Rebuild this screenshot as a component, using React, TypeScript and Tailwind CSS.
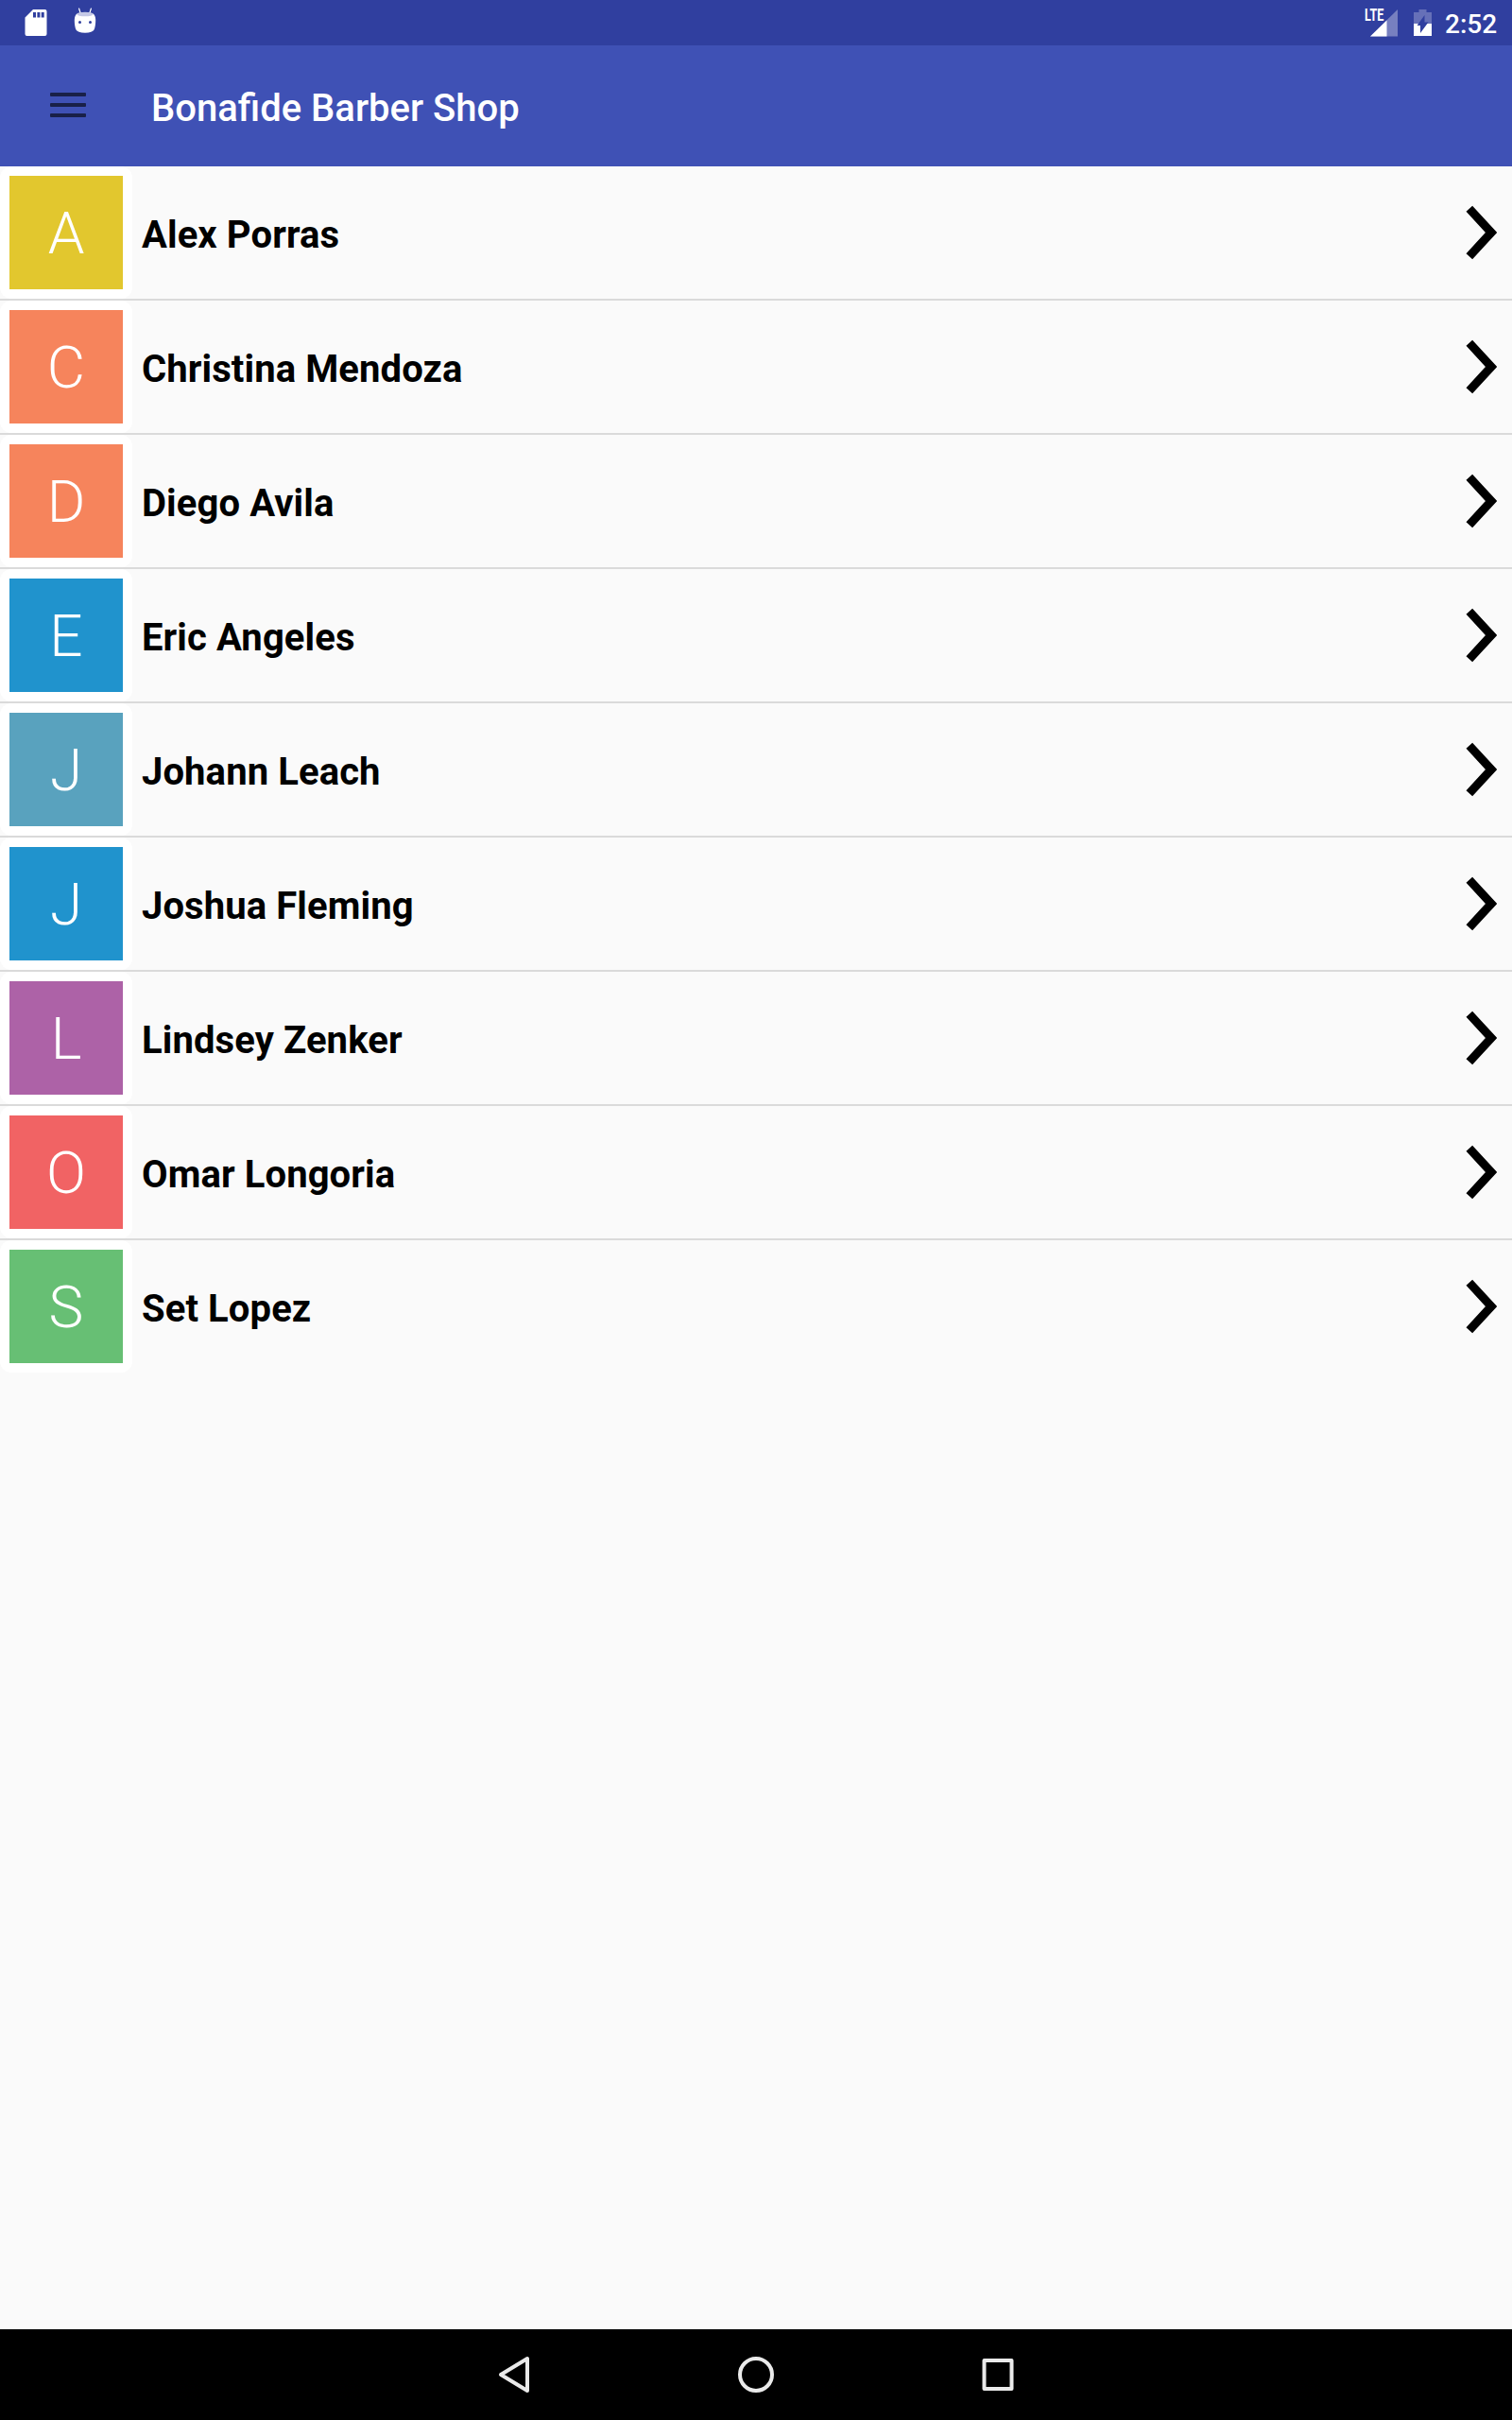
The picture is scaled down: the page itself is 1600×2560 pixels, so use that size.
const barbers = [
  { name: "Alex Porras", color: "bg-[#e2c72e]" },
  { name: "Christina Mendoza", color: "bg-[#f6845c]" },
  { name: "Diego Avila", color: "bg-[#f6845c]" },
  { name: "Eric Angeles", color: "bg-[#2093cd]" },
  { name: "Johann Leach", color: "bg-[#59a2be]" },
  { name: "Joshua Fleming", color: "bg-[#2093cd]" },
  { name: "Lindsey Zenker", color: "bg-[#ad62a7]" },
  { name: "Omar Longoria", color: "bg-[#f16364]" },
  { name: "Set Lopez", color: "bg-[#67bf74]" },
];

function StatusBar() {
  return (
    <div className="flex h-12 shrink-0 items-center bg-[#303f9f] text-white">
      <svg className="ml-[26px]" width="24" height="28" viewBox="0 0 24 28" fill="currentColor">
        <path
          fillRule="evenodd"
          d="M9 0H21.5A2 2 0 0 1 23.5 2V26A2 2 0 0 1 21.5 28H2.5A2 2 0 0 1 .5 26V8.5ZM9 3V8.5H12V3ZM13.4 3V8.5H16.4V3ZM17.7 3V8.5H20.7V3Z"
        />
      </svg>
      <svg className="mb-1 ml-7" width="24" height="28" viewBox="0 0 24 28" fill="currentColor">
        <path d="M5.6 1L7.2 6M18.4 1L16.8 6" stroke="currentColor" strokeWidth="1.2" strokeLinecap="round" />
        <path
          fillRule="evenodd"
          d="M3.5 6.5Q12 3.5 20.5 6.5Q23 8 23.2 13Q23.2 20 21.5 23.5Q20 26.5 12 26.8Q4 26.5 2.5 23.5Q.8 20 .8 13Q1 8 3.500 6.500ZM6.500 14A1.500 1.500 0 1 0 6.500 17A1.500 1.500 0 1 0 6.500 14ZM17.500 14A1.500 1.500 0 1 0 17.500 17A1.500 1.500 0 1 0 17.500 14Z"
        />
        <ellipse cx="12" cy="7" rx="8.500" ry="2.300" fill="#c5c9e6" />
      </svg>
      <div className="relative ml-auto h-12 w-9">
        <svg className="absolute top-[9px] left-[6px]" width="29" height="30" viewBox="0 0 29 30">
          <path d="M29 1V29.500H0Z" fill="#7780c0" />
          <path d="M17.500 12.500V29.500H0Z" fill="#fff" />
        </svg>
        <span className="absolute top-[9px] left-0 origin-left scale-x-[0.72] bg-[#303f9f] text-[17.500px] leading-[15px] font-bold">
          LTE
        </span>
      </div>
      <svg className="ml-4" width="19" height="30" viewBox="0 0 19 30">
        <path d="M5.500 1H13.500V4H19V29H0V4H5.500Z" fill="#6670b8" />
        <path d="M0 16H19V29H0Z" fill="#fff" />
        <path d="M11.500 7V14.500H15.500L7 26V18H3.500Z" fill="#303f9f" />
      </svg>
      <span className="mr-4 ml-[14px] w-[55px] pt-[3px] text-right text-[28px] leading-none font-medium">2:52</span>
    </div>
  );
}

function Toolbar() {
  return (
    <header className="flex h-32 shrink-0 items-center bg-[#3f51b5]">
      <div className="mb-[2px] ml-[53px] flex w-[38px] flex-col gap-[7px]">
        <div className="h-1 rounded-[1px] bg-[#192048]" />
        <div className="h-1 rounded-[1px] bg-[#192048]" />
        <div className="h-1 rounded-[1px] bg-[#192048]" />
      </div>
      <h1 className="ml-[69px] pt-[5px] text-[40px] leading-none font-medium text-white">Bonafide Barber Shop</h1>
    </header>
  );
}

function BarberRow({ name, color }: { name: string; color: string }) {
  return (
    <li className="flex h-[142px] items-center border-b-2 border-[#dadada] last:border-transparent">
      <div className="rounded-xl bg-white p-[10px]">
        <div
          className={`flex size-[120px] items-center justify-center pt-[2px] text-[62px] leading-none font-light text-white ${color}`}
        >
          {name[0]}
        </div>
      </div>
      <span className="ml-[10px] flex-1 pt-[6px] text-[40px] leading-none font-bold tracking-[0.1px] text-black">
        {name}
      </span>
      <svg className="mr-4" width="34" height="60" viewBox="0 0 34 60" fill="none">
        <path d="M4.800 4.800L28 30L4.800 55.200" stroke="#000" strokeWidth="9" />
      </svg>
    </li>
  );
}

function NavBar() {
  return (
    <nav className="flex h-24 shrink-0 items-center justify-center gap-[216px] bg-black">
      <svg width="40" height="40" viewBox="0 0 40 40" fill="none" stroke="#eaeaea" strokeWidth="4" strokeLinejoin="round">
        <path d="M34 3V37L6 20Z" />
      </svg>
      <svg width="40" height="40" viewBox="0 0 40 40" fill="none" stroke="#eaeaea" strokeWidth="4">
        <circle cx="20" cy="20" r="17" />
      </svg>
      <svg width="40" height="40" viewBox="0 0 40 40" fill="none" stroke="#eaeaea" strokeWidth="4" strokeLinejoin="round">
        <path d="M5.500 5H34.500V35H5.500Z" />
      </svg>
    </nav>
  );
}

export default function App() {
  return (
    <div className="flex h-[2560px] w-[1600px] flex-col bg-[#fafafa] font-['Roboto',sans-serif]">
      <StatusBar />
      <Toolbar />
      <ul className="flex-1">
        {barbers.map((b) => (
          <BarberRow key={b.name} name={b.name} color={b.color} />
        ))}
      </ul>
      <NavBar />
    </div>
  );
}
